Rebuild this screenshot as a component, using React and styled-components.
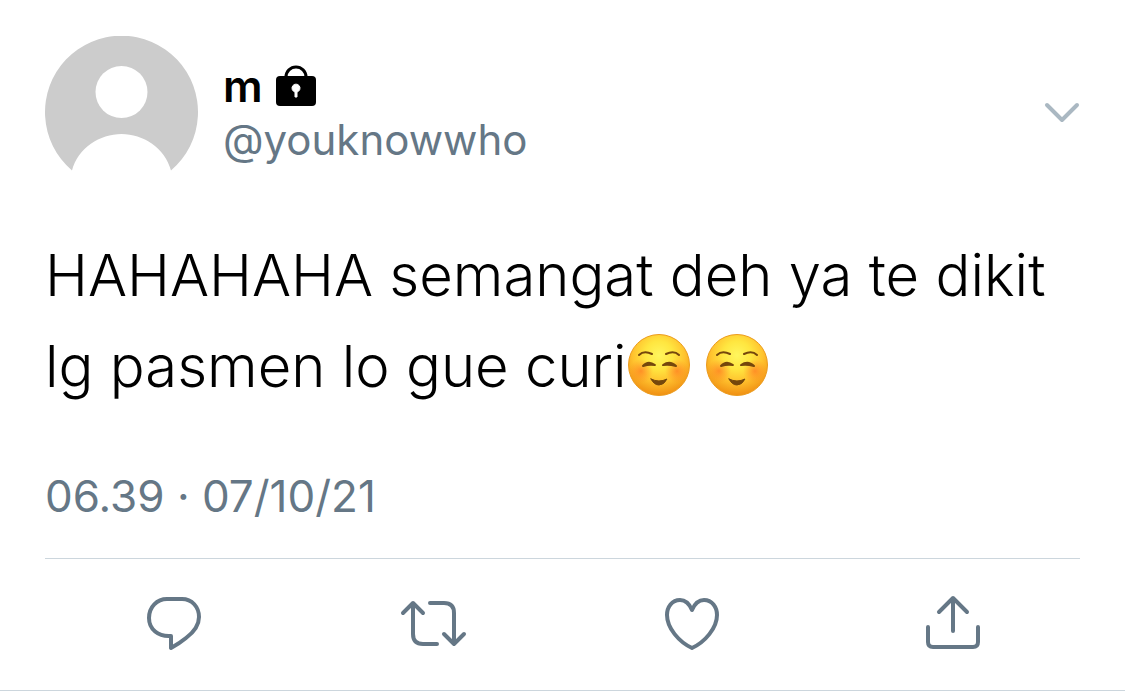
import React from 'react';
import styled, {createGlobalStyle} from "styled-components";


const GlobalStyle = createGlobalStyle`
  body {
    margin: 0;
    background-color: white;
    color: black;
    font-family: Inter, "Liberation Sans", sans-serif;
  }
`

const Tweet = styled.article`
  padding: 36px 45px 38px;
  border-bottom: 1px solid #ccd6dd;
`

const Header = styled.header`
  display: flex;
  gap: 25px;
`

const Avatar = styled.svg`
  flex: none;
  width: 153px;
  height: 153px;
`

const Author = styled.div`
  flex: 1;
  padding-top: 22px;
`

const Name = styled.div`
  display: flex;
  align-items: center;
  gap: 12px;
  height: 56px;
  font-size: 44px;
  font-weight: 600;
  line-height: 56px;
`

const Lock = styled.svg`
  width: 42px;
  height: 42px;
`

const Handle = styled.a`
  display: block;
  color: #657786;
  font-size: 42px;
  line-height: 52px;
  text-decoration: none;
`

const IconButton = styled.button`
  display: flex;
  padding: 0;
  border: none;
  background: none;
  color: ${props => props.$muted ? '#aab8c2' : '#657786'};
  cursor: pointer;

  svg {
    display: block;
    overflow: visible;
    fill: none;
    stroke: currentColor;
    stroke-linecap: round;
    stroke-linejoin: round;
  }
`

const MenuSlot = styled.div`
  padding-top: 64px;
`

const Text = styled.p`
  margin: 41px 0 0;
  font-size: 58px;
  font-weight: 300;
  line-height: 91px;
`

const Emoji = styled.svg`
  width: 64px;
  height: 64px;
  margin-left: ${props => props.$spaced ? 14 : 0}px;
  vertical-align: -10px;
`

const Time = styled.time`
  display: block;
  margin-top: 56px;
  color: #657786;
  font-size: 44px;
  line-height: 56px;
`

const Actions = styled.footer`
  display: grid;
  grid-template-columns: repeat(4, 1fr);
  justify-items: center;
  margin-top: 34px;
  padding-top: 36px;
  border-top: 1px solid #ccd6dd;
`

const icons = {
  Reply: <path d="M25 4 H40 C50 4 57 12 57 22 C57 31 52 37 44 43 Q38 48 29 53 V41 C16 42 7 34 7 23 C7 12 15 4 25 4 Z"/>,
  Retweet: (
    <>
      <path d="M2 18 L12 8 L22 18 M12 8 V39 Q12 49 22 49 H36"/>
      <path d="M29 8 H43 Q53 8 53 18 V49 M43 39 L53 49 L63 39"/>
    </>
  ),
  Like: <path d="M32 15 C29 8 25 5 20 5 C12 5 7 12 7 20 C7 33 19 47 32 53 C45 47 57 33 57 20 C57 12 52 5 44 5 C39 5 35 8 32 15 Z"/>,
  Share: <path d="M34 36 V3 M20 17 L34 3 L48 17 M9 32 V47 Q9 52 14 52 H54 Q59 52 59 47 V32"/>,
};

const SmilingFace = ({ id, spaced }) => (
  <Emoji viewBox="0 0 64 64" role="img" aria-label="smiling face" $spaced={spaced}>
    <defs>
      <radialGradient id={`${id}-skin`} cx="50%" cy="34%" r="66%">
        <stop offset="0" stopColor="#fff65e"/>
        <stop offset="0.35" stopColor="#ffe640"/>
        <stop offset="0.65" stopColor="#ffc22e"/>
        <stop offset="1" stopColor="#f08f12"/>
      </radialGradient>
      <radialGradient id={`${id}-cheek`}>
        <stop offset="0" stopColor="#ff6a1f" stopOpacity="0.6"/>
        <stop offset="1" stopColor="#ff7a1f" stopOpacity="0"/>
      </radialGradient>
    </defs>
    <circle cx="32" cy="32" r="30.500" fill={`url(#${id}-skin)`} stroke="#ec9c1f"/>
    <circle cx="14" cy="38" r="12" fill={`url(#${id}-cheek)`}/>
    <circle cx="50" cy="38" r="12" fill={`url(#${id}-cheek)`}/>
    <g fill="#75470c" stroke="#75470c" strokeLinecap="round" strokeLinejoin="round">
      <path d="M12 22 Q17 17 25 21 M39 21 Q47 17 52 22" fill="none" strokeWidth="2"/>
      <path d="M16 33 Q21 27 28 32 Q22 31 16 33 Z M36 32 Q43 27 49 33 Q42 31 36 32 Z" strokeWidth="2"/>
      <path d="M24 46 Q32 50 40 46 Q37 52 32 52 Q27 52 24 46 Z" strokeWidth="1"/>
    </g>
  </Emoji>
);

const Action = ({ label }) => (
  <IconButton type="button" aria-label={label}>
    <svg width="64" height="57" viewBox="0 0 64 57" strokeWidth="4">{icons[label]}</svg>
  </IconButton>
);

const App = () => (
  <>
    <GlobalStyle/>
    <Tweet>
      <Header>
        <Avatar viewBox="0 0 153 153" role="img" aria-label="Profile picture">
          <path d="M27 134.5 A76.5 76.5 0 1 1 126 134.5 C120 112 98 98 76.5 98 C55 98 33 112 27 134.5 Z" fill="#ccc"/>
          <circle cx="76.5" cy="56" r="26" fill="white"/>
        </Avatar>
        <Author>
          <Name>
            m
            <Lock viewBox="0 0 42 42" role="img" aria-label="locked">
              <path d="M11 14 V12 A10 10 0 0 1 31 12 V14" fill="none" stroke="black" strokeWidth="3"/>
              <rect x="1" y="11" width="40" height="30" rx="4"/>
              <path d="M20 32 V27 A4 4 0 1 1 22 27 V32 Z" fill="white" stroke="white" strokeLinejoin="round"/>
            </Lock>
          </Name>
          <Handle href="#youknowwho">@youknowwho</Handle>
        </Author>
        <MenuSlot>
          <IconButton type="button" aria-label="More" $muted>
            <svg width="36" height="26" viewBox="0 0 36 26" strokeWidth="4">
              <path d="M3 5 L18 20 L33 5"/>
            </svg>
          </IconButton>
        </MenuSlot>
      </Header>
      <Text>
        HAHAHAHA semangat deh ya te dikit lg pasmen lo gue curi
        <SmilingFace id="first"/>
        <SmilingFace id="second" spaced/>
      </Text>
      <Time dateTime="2021-10-07T06:39">06.39 · 07/10/21</Time>
      <Actions>
        {Object.keys(icons).map(label => <Action key={label} label={label}/>)}
      </Actions>
    </Tweet>
  </>
);

export default App;
